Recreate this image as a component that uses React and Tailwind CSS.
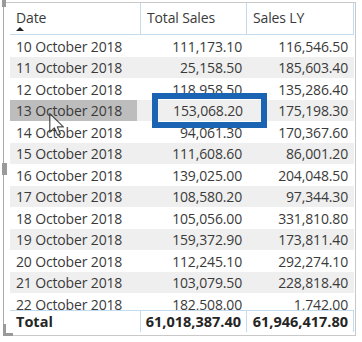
const rows = [
    ['10 October 2018', '111,173.10', '116,546.50'],
    ['11 October 2018', '25,158.50', '185,603.40'],
    ['12 October 2018', '118,958.50', '135,286.40'],
    ['13 October 2018', '153,068.20', '175,198.30'],
    ['14 October 2018', '94,061.30', '170,367.60'],
    ['15 October 2018', '111,608.60', '86,001.20'],
    ['16 October 2018', '139,025.00', '204,048.50'],
    ['17 October 2018', '108,580.20', '97,344.30'],
    ['18 October 2018', '105,056.00', '331,810.80'],
    ['19 October 2018', '159,372.90', '173,811.40'],
    ['20 October 2018', '112,245.10', '292,274.10'],
    ['21 October 2018', '103,079.50', '228,818.40'],
    ['22 October 2018', '182,508.00', '1,742.00'],
];

const Cursor = () => (
    <svg width="16" height="24" viewBox="0 0 13 20" className="absolute left-[49px] top-[113px] opacity-80">
        <path d="M0.5 0.5 L0.5 16 L4.3 12.4 L7 18.5 L9.4 17.5 L6.8 11.6 L11.8 11.6 Z" fill="#ffffff" stroke="#222" strokeWidth="1" strokeLinejoin="round" />
    </svg>
);

const App = () => {
    return (
        <div className="w-[362px] h-[342px] bg-white relative overflow-hidden font-['Open_Sans',sans-serif] text-[14px] tracking-[-0.15px] text-[#3a3a3a]">
            <div className="ml-[3px] mt-[2px] w-[353px] h-[334px] border border-[#c9c9c9] border-l-[#a9a9a9] pl-[6px] flex flex-col">
                {/* header */}
                <div className="flex h-[32px] w-[344px] border-b border-[#c4dbee] shrink-0">
                    <div className="w-[131px] border-r border-[#c4dbee] pl-[6px] pt-[4px] relative">
                        Date
                        <span className="absolute left-[6px] top-[24px] w-0 h-0 border-l-[4.5px] border-r-[4.5px] border-b-[4px] border-l-transparent border-r-transparent border-b-[#222]"></span>
                    </div>
                    <div className="w-[106px] border-r border-[#c4dbee] pl-[6px] pt-[4px]">Total Sales</div>
                    <div className="w-[107px] border-r border-[#c4dbee] pl-[6px] pt-[4px]">Sales LY</div>
                </div>

                {/* body */}
                <div className="h-[275px] overflow-hidden w-[344px] shrink-0">
                    {rows.map((r, i) => (
                        <div key={r[0]} className={`flex h-[21.5px] items-center ${i % 2 === 1 ? 'bg-[#efefef]' : 'bg-white'}`}>
                            <div className={`h-full flex items-center pl-[6px] pt-[1px] ${i === 3 ? 'bg-[#bdbdbd] mr-[3px] w-[128px]' : 'w-[131px]'}`}>{r[0]}</div>
                            <div className={`${i === 3 ? 'ml-[3px]' : ''} w-[106px] text-right pr-[5px] pt-[1px]`}>{r[1]}</div>
                            <div className="w-[107px] text-right pr-[6px] pt-[1px]">{r[2]}</div>
                        </div>
                    ))}
                </div>

                {/* total */}
                <div className="flex h-[22px] w-[344px] border-t border-[#c4dbee] font-bold text-[14.5px] text-[#252525] shrink-0 tracking-normal">
                    <div className="w-[131px] border-r border-[#c4dbee] pl-[6px] flex items-center">Total</div>
                    <div className="w-[106px] border-r border-[#c4dbee] flex items-center justify-end pr-[5px]">61,018,387.40</div>
                    <div className="w-[107px] border-r border-[#c4dbee] flex items-center justify-end pr-[5px]">61,946,417.80</div>
                </div>
            </div>

            {/* visual handles */}
            <div className="absolute left-[2px] top-0 w-[4px] h-[7px] bg-[#9a9a9a]"></div>
            <div className="absolute left-[2px] top-[163px] w-[5px] h-[12px] bg-[#9a9a9a]"></div>
            <div className="absolute left-[3px] top-[324px] w-[3px] h-[12px] bg-[#9a9a9a]"></div>
            <div className="absolute left-[3px] top-[333px] w-[10px] h-[3px] bg-[#9a9a9a]"></div>

            {/* selection box */}
            <div className="absolute left-[152px] top-[93px] w-[115px] h-[35px] border-[6px] border-[#1b63b3]"></div>

            <Cursor />
        </div>
    );
};

export default App;
